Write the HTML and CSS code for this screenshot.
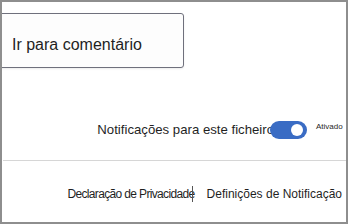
FILE: index.html
```html
<!DOCTYPE html>
<html>
<head>
<meta charset="utf-8">
<link rel="stylesheet" href="styles.css">
</head>
<body>
<div class="frame">
  <div class="top">
    <div class="goto">Ir para comentário</div>
  </div>
  <div class="notify-row">
    <span class="notify-label">Notificações para este ficheiro</span>
    <span class="toggle"><span class="knob"></span></span>
    <span class="state">Ativado</span>
  </div>
  <div class="footer">
    <span class="link privacy">Declaração de Privacidade</span>
    <span class="sep"></span>
    <span class="link settings">Definições de Notificação</span>
  </div>
</div>
</body>
</html>
```
FILE: styles.css
```css
html, body {
  margin: 0;
  padding: 0;
  background: #ffffff;
}
body {
  font-family: "Liberation Sans", Arial, sans-serif;
  color: #1f1f1f;
}
.frame {
  box-sizing: border-box;
  width: 348px;
  height: 224px;
  border: 2px solid #8e8e8e;
  overflow: hidden;
  display: flex;
  flex-direction: column;
}
.top {
  padding-top: 11px;
  height: 109px;
  box-sizing: border-box;
}
.goto {
  box-sizing: border-box;
  margin-left: -20px;
  width: 202px;
  height: 55px;
  border: 1.5px solid #6f707c;
  border-radius: 3px;
  background: #fdfdfd;
  font-size: 16px;
  line-height: 20px;
  padding: 21px 0 0 29px;
  box-shadow: 0 1px 2px rgba(0,0,0,0.08);
}
.notify-row {
  box-sizing: border-box;
  display: flex;
  align-items: center;
  justify-content: flex-end;
  height: 50px;
  padding-bottom: 12px;
  border-bottom: 1px solid #d6d6d6;
  margin-left: 1px;
}
.notify-label {
  font-size: 13.2px;
  margin-right: -4px;
  position: relative;
  z-index: 0;
}
.toggle {
  position: relative;
  z-index: 1;
  width: 37px;
  height: 18px;
  border-radius: 9px;
  background: #3a6cc4;
  display: inline-block;
  margin-right: 9px;
}
.knob {
  position: absolute;
  right: 4px;
  top: 3px;
  width: 12px;
  height: 12px;
  border-radius: 50%;
  background: #ffffff;
}
.state {
  font-size: 8px;
  width: 30px;
  margin-top: -6px;
}
.footer {
  display: flex;
  align-items: center;
  justify-content: flex-end;
  flex: 1;
  padding-right: 4px;
  padding-top: 4px;
}
.link {
  font-size: 12px;
  white-space: nowrap;
}
.privacy {
  font-size: 12px;
  letter-spacing: -0.65px;
}
.sep {
  width: 1px;
  height: 16px;
  background: #555;
  margin: 0 14px 0 -3px;
}
```
